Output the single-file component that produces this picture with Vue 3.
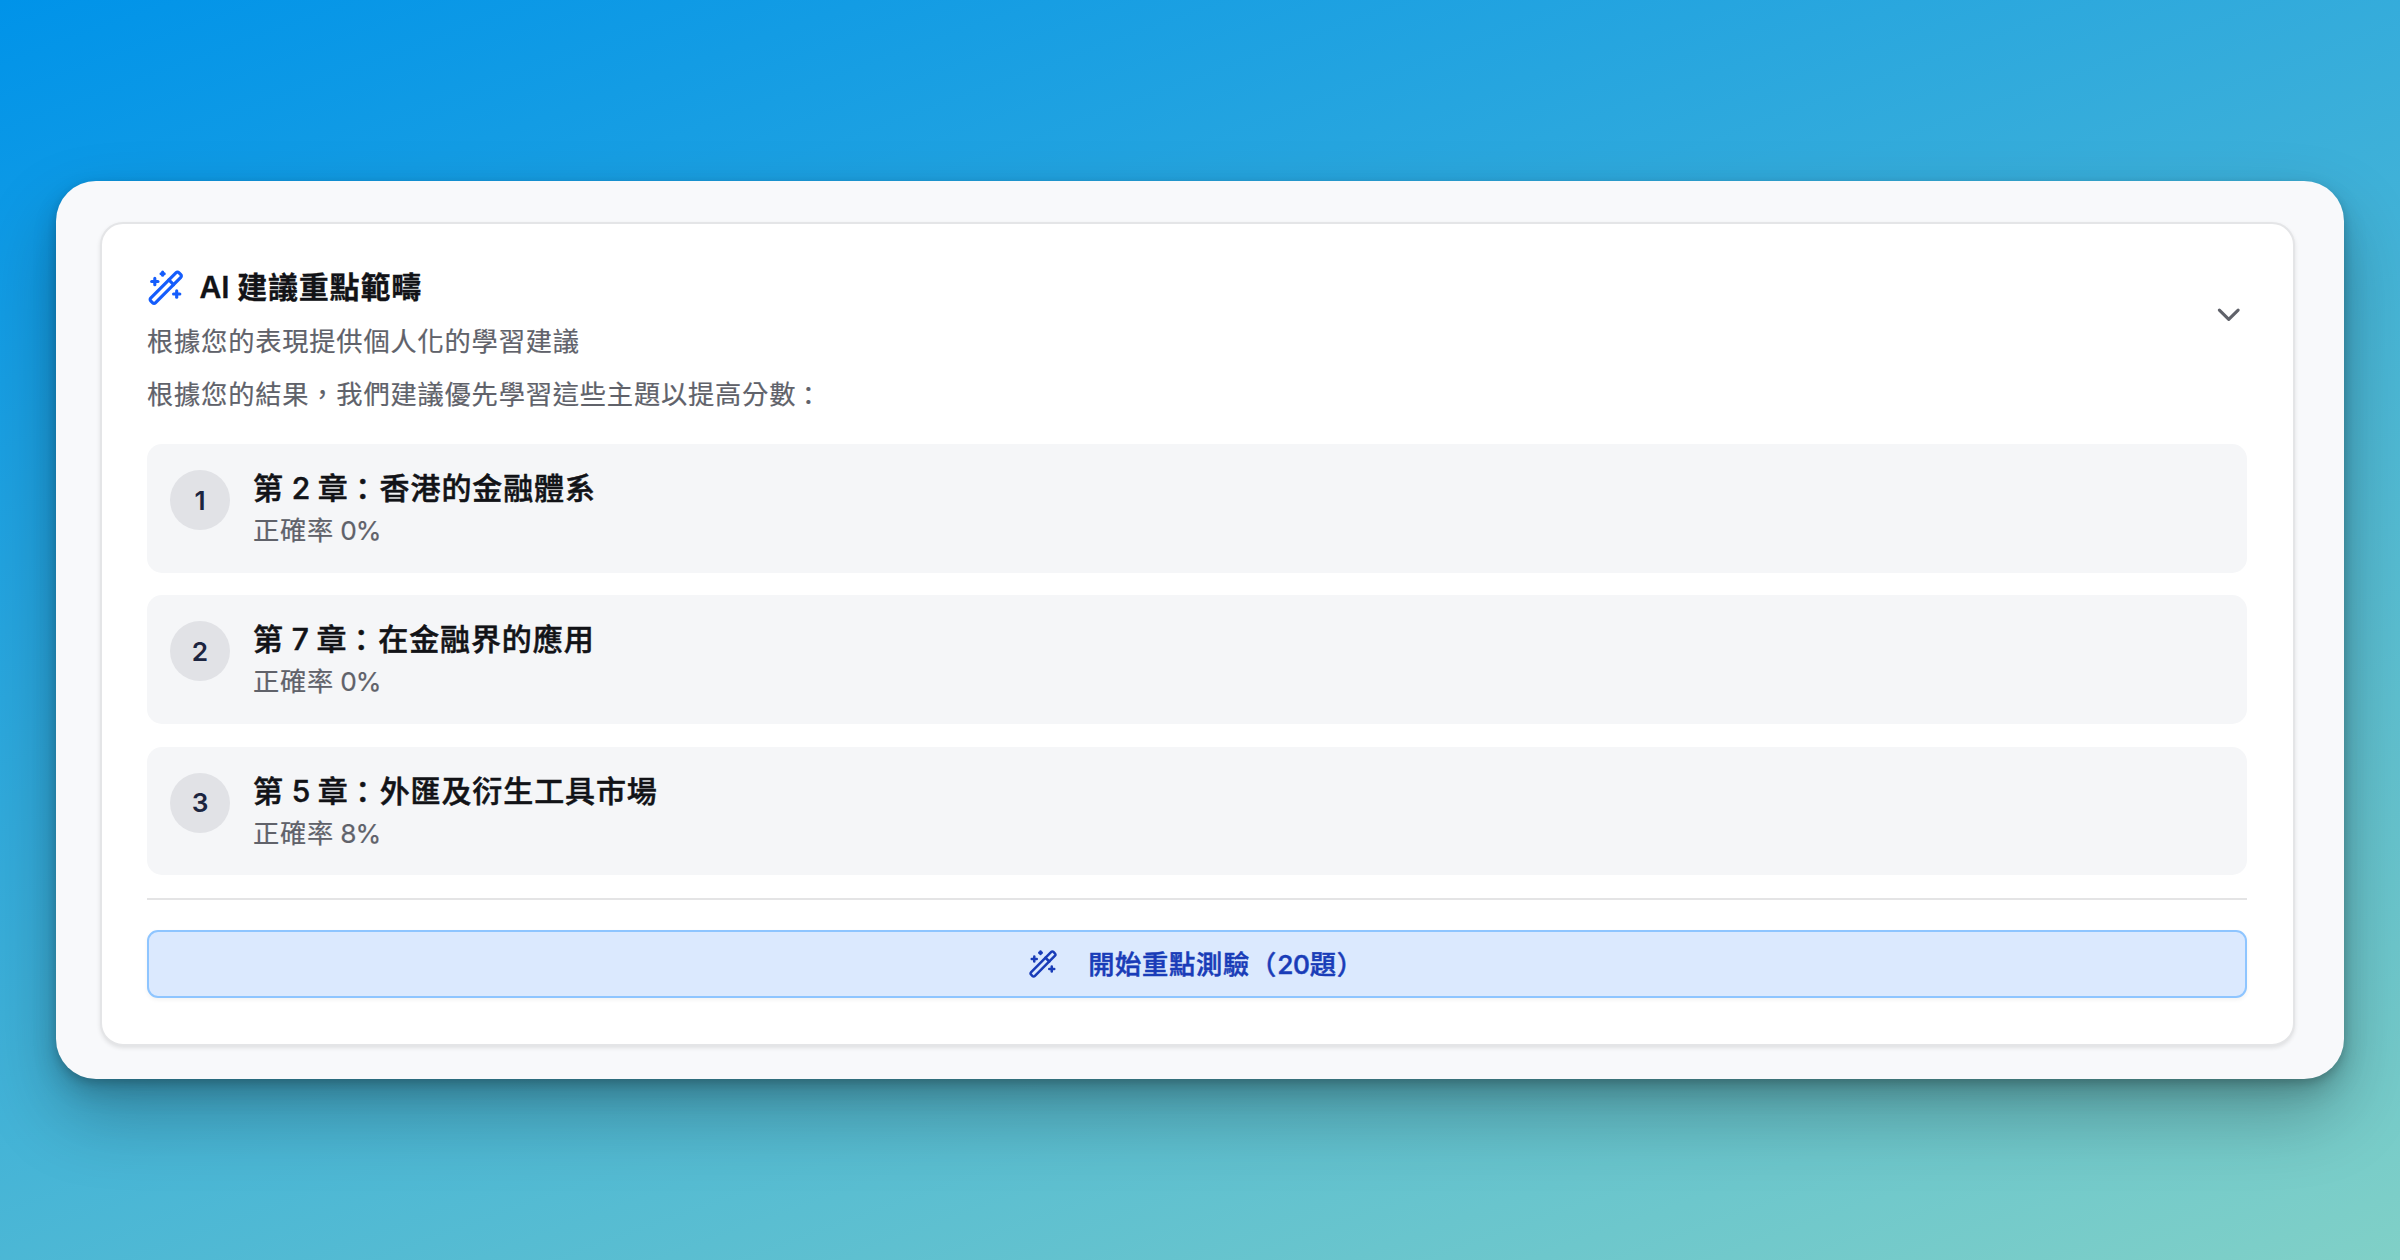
<template>
  <div class="backdrop">
    <main class="window">
      <section class="card">
        <header class="card-header">
          <div>
            <h2 class="title">
              <svg class="icon" viewBox="0 0 24 24">
                <path v-for="d in wand" :key="d" :d="d" />
              </svg>
              <span><span class="latin">AI </span>建議重點範疇</span>
            </h2>
            <p class="desc">根據您的表現提供個人化的學習建議</p>
          </div>
          <svg class="icon chevron" viewBox="0 0 24 24">
            <path d="m6 9 6 6 6-6" />
          </svg>
        </header>

        <p class="intro">根據您的結果，我們建議優先學習這些主題以提高分數<span class="colon">：</span></p>

        <ul class="topics">
          <li v-for="(topic, index) in topics" :key="topic.chapter" class="topic">
            <span class="badge">{{ index + 1 }}</span>
            <div>
              <h3 class="topic-name">
                第<span class="latin">&nbsp;{{ topic.chapter }}&nbsp;</span>章<span class="colon">：</span>{{ topic.name }}
              </h3>
              <p class="topic-rate">正確率<span class="latin">&nbsp;{{ topic.rate }}%</span></p>
            </div>
          </li>
        </ul>

        <footer class="card-footer">
          <button class="start-btn" type="button">
            <svg class="icon" viewBox="0 0 24 24">
              <path v-for="d in wand" :key="d" :d="d" />
            </svg>
            <span>開始重點測驗（<span class="latin">20</span>題）</span>
          </button>
        </footer>
      </section>
    </main>
  </div>
</template>

<script setup>
const topics = [
  { chapter: 2, name: "香港的金融體系", rate: 0 },
  { chapter: 7, name: "在金融界的應用", rate: 0 },
  { chapter: 5, name: "外匯及衍生工具市場", rate: 8 },
];

// 魔術棒圖示
const wand = [
  "m21.64 3.64-1.28-1.28a1.21 1.21 0 0 0-1.72 0L2.36 18.64a1.21 1.21 0 0 0 0 1.72l1.28 1.28a1.2 1.2 0 0 0 1.72 0L21.64 5.36a1.2 1.2 0 0 0 0-1.72",
  "m14 7 3 3",
  "M5 6v4",
  "M19 14v4",
  "M10 2v2",
  "M7 8H3",
  "M21 16h-4",
  "M11 3H9",
];
</script>

<style>
body {
  margin: 0;
}
</style>

<style scoped>
.backdrop {
  display: flex;
  align-items: center;
  justify-content: center;
  box-sizing: border-box;
  width: 100vw;
  height: 100vh;
  background: linear-gradient(160deg, #0093e9 0%, #80d0c7 100%);
  font-family: Inter, "Noto Sans CJK TC", sans-serif;
  color: #121317;
}

.window {
  box-sizing: border-box;
  width: 2288px;
  height: 898px;
  padding: 41px 49px 33px 44px;
  border-radius: 40px;
  background: #f8f9fb;
  box-shadow: 0 4px 8px rgba(0, 0, 0, 0.16), 0 12px 24px rgba(0, 0, 0, 0.16),
    0 36px 72px rgba(0, 0, 0, 0.26);
}

.card {
  box-sizing: border-box;
  height: 824px;
  padding: 45px 46px 0 45px;
  border: 2px solid #e4e5e7;
  border-radius: 23px;
  background: #fff;
  box-shadow: 0 2px 4px rgba(0, 0, 0, 0.1);
}

h2,
h3,
p,
ul {
  margin: 0;
  padding: 0;
}

.icon {
  flex: none;
  width: 37.5px;
  height: 37.5px;
  fill: none;
  stroke: currentColor;
  stroke-width: 2;
  stroke-linecap: round;
  stroke-linejoin: round;
}

.latin {
  letter-spacing: -0.2px;
}

/* 冒號略微下移 */
.colon {
  display: inline-block;
  line-height: 1;
  transform: translate(-1px, 1px);
}

.card-header {
  display: flex;
  align-items: center;
  justify-content: space-between;
}

.title {
  display: flex;
  align-items: center;
  gap: 15px;
  height: 38px;
  font-size: 30px;
  font-weight: 600;
  line-height: 34px;
  letter-spacing: 0.8px;
  -webkit-text-stroke: 0.3px currentColor;
}

.title .icon {
  color: #155dfc;
}

.title > span {
  padding-bottom: 2px;
}

.title .latin {
  letter-spacing: 0;
}

.desc,
.intro {
  height: 38px;
  font-size: 26.25px;
  line-height: 39px;
  letter-spacing: 0.8px;
  color: #60626a;
  -webkit-text-stroke: 0.2px currentColor;
}

.desc {
  margin-top: 15px;
}

.chevron {
  color: #60626a;
}

.intro {
  margin-top: 15px;
}

.topics {
  display: grid;
  gap: 22.5px;
  margin-top: 31px;
  list-style: none;
}

.topic {
  display: flex;
  gap: 23px;
  box-sizing: border-box;
  height: 128.75px;
  padding: 22px 23px;
  border-radius: 15px;
  background: #f5f6f8;
}

.badge {
  display: flex;
  align-items: center;
  justify-content: center;
  flex: none;
  width: 60px;
  height: 60px;
  margin-top: 4px;
  border-radius: 50%;
  background: #e1e2e6;
  font-size: 26.25px;
  font-weight: 600;
  color: #1c2540;
}

.topic-name {
  font-size: 30px;
  font-weight: 500;
  line-height: 45px;
  letter-spacing: 0.9px;
  -webkit-text-stroke: 0.5px currentColor;
}

.topic-rate {
  font-size: 26.25px;
  line-height: 40px;
  letter-spacing: 0.7px;
  color: #60626a;
  -webkit-text-stroke: 0.2px currentColor;
}

.topic-rate .latin {
  letter-spacing: -1px;
}

.card-footer {
  margin-top: 22.75px;
  padding-top: 30px;
  border-top: 2px solid #e4e4e5;
}

.start-btn {
  display: flex;
  align-items: center;
  justify-content: center;
  gap: 30px;
  box-sizing: border-box;
  width: 100%;
  height: 68px;
  padding: 0 2px 0 0;
  border: 2px solid #8ec5ff;
  border-radius: 11px;
  background: #dbe9fe;
  box-shadow: 0 2px 4px rgba(0, 0, 0, 0.05);
  font-family: inherit;
  font-size: 26.25px;
  font-weight: 500;
  letter-spacing: 0.75px;
  color: #193cb8;
  -webkit-text-stroke: 0.5px currentColor;
}

.start-btn > span {
  padding-bottom: 2px;
}

.start-btn .icon {
  width: 30px;
  height: 30px;
}
</style>
